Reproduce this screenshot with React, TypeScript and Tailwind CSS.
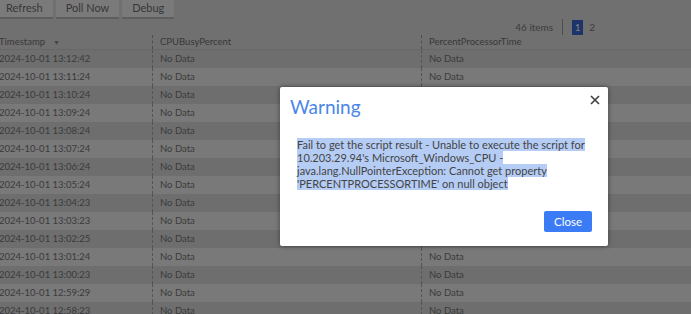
import React from "react"

const rows = [
    "2024-10-01 13:12:42",
    "2024-10-01 13:11:24",
    "2024-10-01 13:10:24",
    "2024-10-01 13:09:24",
    "2024-10-01 13:08:24",
    "2024-10-01 13:07:24",
    "2024-10-01 13:06:24",
    "2024-10-01 13:05:24",
    "2024-10-01 13:04:23",
    "2024-10-01 13:03:23",
    "2024-10-01 13:02:25",
    "2024-10-01 13:01:24",
    "2024-10-01 13:00:23",
    "2024-10-01 12:59:29",
    "2024-10-01 12:58:23",
]

function ToolButton({ label }: { label: string }) {
    return (
        <button className="h-[21px] px-[10px] bg-[#f5f5f5] border-b-2 border-[#bcbcbc] text-[11px] text-[#707070] leading-none">
            {label}
        </button>
    )
}

export default function App(): JSX.Element {
    return (
        <div className="relative w-[691px] h-[314px] overflow-hidden bg-[#e0e0e0] font-['Lato',sans-serif]">
            {/* page behind the modal */}
            <div className="-ml-[4px] -mt-[2px]">
                <div className="flex gap-[3px]">
                    <ToolButton label="Refresh" />
                    <ToolButton label="Poll Now" />
                    <ToolButton label="Debug" />
                </div>
                <div className="flex items-center justify-end h-[16px] pr-[96px] text-[10px] text-[#7a7a7a]">
                    <span>46 items</span>
                    <span className="ml-[9px] mr-[9px] w-px h-[16px] bg-[#9a9a9a]" />
                    <span className="w-[11px] h-[15px] bg-[#3869d0] text-white flex items-center justify-center">1</span>
                    <span className="ml-[6px]">2</span>
                </div>
                <div className="flex h-[15px] items-center text-[9.5px] text-[#727272] border-b border-[#cfcfcf]">
                    <div className="w-[156px] pl-[3px] flex items-center gap-[8px]">
                        <span>Timestamp</span>
                        <span className="text-[7px] text-[#8a8a8a]">▼</span>
                    </div>
                    <div className="w-[269px] h-full flex items-center pl-[7px] border-l border-dashed border-[#9a9a9a]">CPUBusyPercent</div>
                    <div className="flex-1 h-full flex items-center pl-[7px] border-l border-dashed border-[#9a9a9a]">PercentProcessorTime</div>
                </div>
                {rows.map((r, i) => (
                    <div
                        key={r}
                        className={`flex h-[18px] items-center text-[9.5px] text-[#777] ${i % 2 === 0 ? "bg-[#dcdcdc]" : "bg-[#f2f2f2]"}`}
                    >
                        <div className="w-[156px] pl-[3px]">{r}</div>
                        <div className="w-[269px] h-full flex items-center pl-[7px] border-l border-dashed border-[#a8a8a8]">No Data</div>
                        <div className="flex-1 h-full flex items-center pl-[7px] border-l border-dashed border-[#a8a8a8]">No Data</div>
                    </div>
                ))}
            </div>

            {/* modal backdrop */}
            <div className="absolute inset-0 bg-black/50" />

            {/* dialog */}
            <div className="absolute left-[280px] top-[87px] w-[328px] h-[159px] bg-white rounded-[2px] shadow-[0_0_5px_rgba(0,0,0,0.45)]">
                <div className="flex items-start justify-between pl-[10px] pr-[8px] pt-[8px]">
                    <h2 className="text-[19px] leading-[24px] text-[#4a86e8]">Warning</h2>
                    <svg width="10" height="10" viewBox="0 0 10 10" className="mt-[0px]">
                        <path d="M1 1 L9 9 M9 1 L1 9" stroke="#444" strokeWidth="1.7" />
                    </svg>
                </div>
                <p className="mt-[19px] ml-[17px] mr-[14px] text-[11px] leading-[13px] text-[#444]">
                    <span className="bg-[#b5cdf5]">
                        Fail to get the script result - Unable to execute the script for 10.203.29.94's Microsoft_Windows_CPU - java.lang.NullPointerException: Cannot get property 'PERCENTPROCESSORTIME' on null object
                    </span>
                </p>
                <div className="flex justify-end pr-[16px] mt-[21px]">
                    <button className="h-[21px] px-[10px] bg-[#3b7bf6] text-white text-[11.5px] rounded-[2px]">Close</button>
                </div>
            </div>
        </div>
    )
}
